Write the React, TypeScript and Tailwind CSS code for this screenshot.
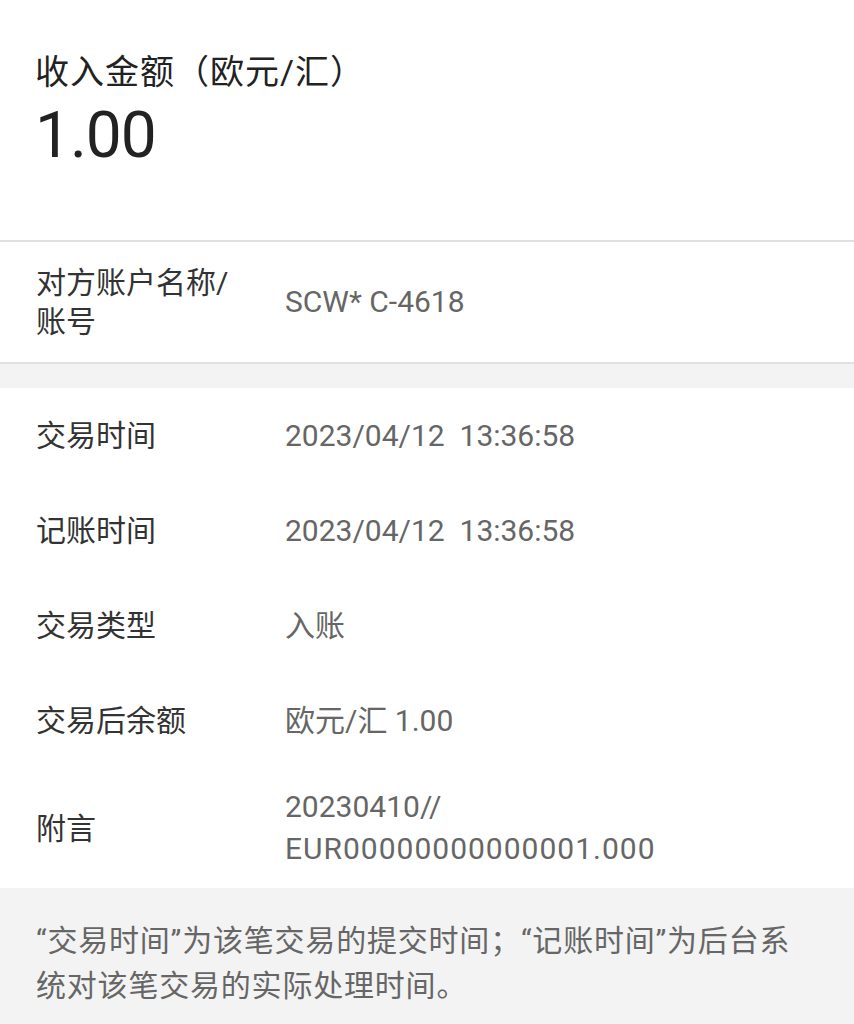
import React from 'react';

const font = { fontFamily: 'Roboto, "Noto Sans CJK SC", sans-serif' };

interface RowProps {
  label: string;
  children: React.ReactNode;
  className?: string;
}

const Row: React.FC<RowProps> = ({ label, children, className = 'h-[95px]' }) => (
  <div className={`grid grid-cols-[249px_1fr] items-center pl-[36px] ${className}`}>
    <div className="max-w-[205px] text-[30px] leading-[39px] text-[#333]">{label}</div>
    <div className="text-[30px] leading-[42px] text-[#666]">{children}</div>
  </div>
);

const App: React.FC = () => {
  return (
    <div className="w-[854px] h-[1024px] bg-white flex flex-col overflow-hidden" style={font}>
      <div className="h-[242px] shrink-0 pl-[35px] pt-[50px] border-b-2 border-[#e0e0e0]">
        <div className="text-[34px] leading-[44px] text-[#222] tracking-[1px]">收入金额（欧元/汇）</div>
        <div className="text-[64px] leading-[76px] text-[#222] mt-[4px] tracking-[-1px]">1.00</div>
      </div>

      <Row label="对方账户名称/账号" className="h-[120px] shrink-0">
        SCW* C-4618
      </Row>
      <div className="h-[26px] shrink-0 bg-[#f3f3f3] border-t-2 border-[#e0e0e0]" />

      <Row label="交易时间">2023/04/12&nbsp;&nbsp;13:36:58</Row>
      <Row label="记账时间">2023/04/12&nbsp;&nbsp;13:36:58</Row>
      <Row label="交易类型">入账</Row>
      <Row label="交易后余额">欧元/汇 1.00</Row>
      <Row label="附言" className="h-[120px] shrink-0">
        <div>20230410//</div>
        <div className="tracking-[1px]">EUR00000000000001.000</div>
      </Row>

      <div className="flex-1 bg-[#f3f3f3] pl-[36px] pt-[30px]">
        <p className="max-w-[770px] text-[30px] leading-[45px] text-[#666] tracking-[0.8px]">
          “交易时间”为该笔交易的提交时间；“记账时间”为后台系统对该笔交易的实际处理时间。
        </p>
      </div>
    </div>
  );
};

export default App;
